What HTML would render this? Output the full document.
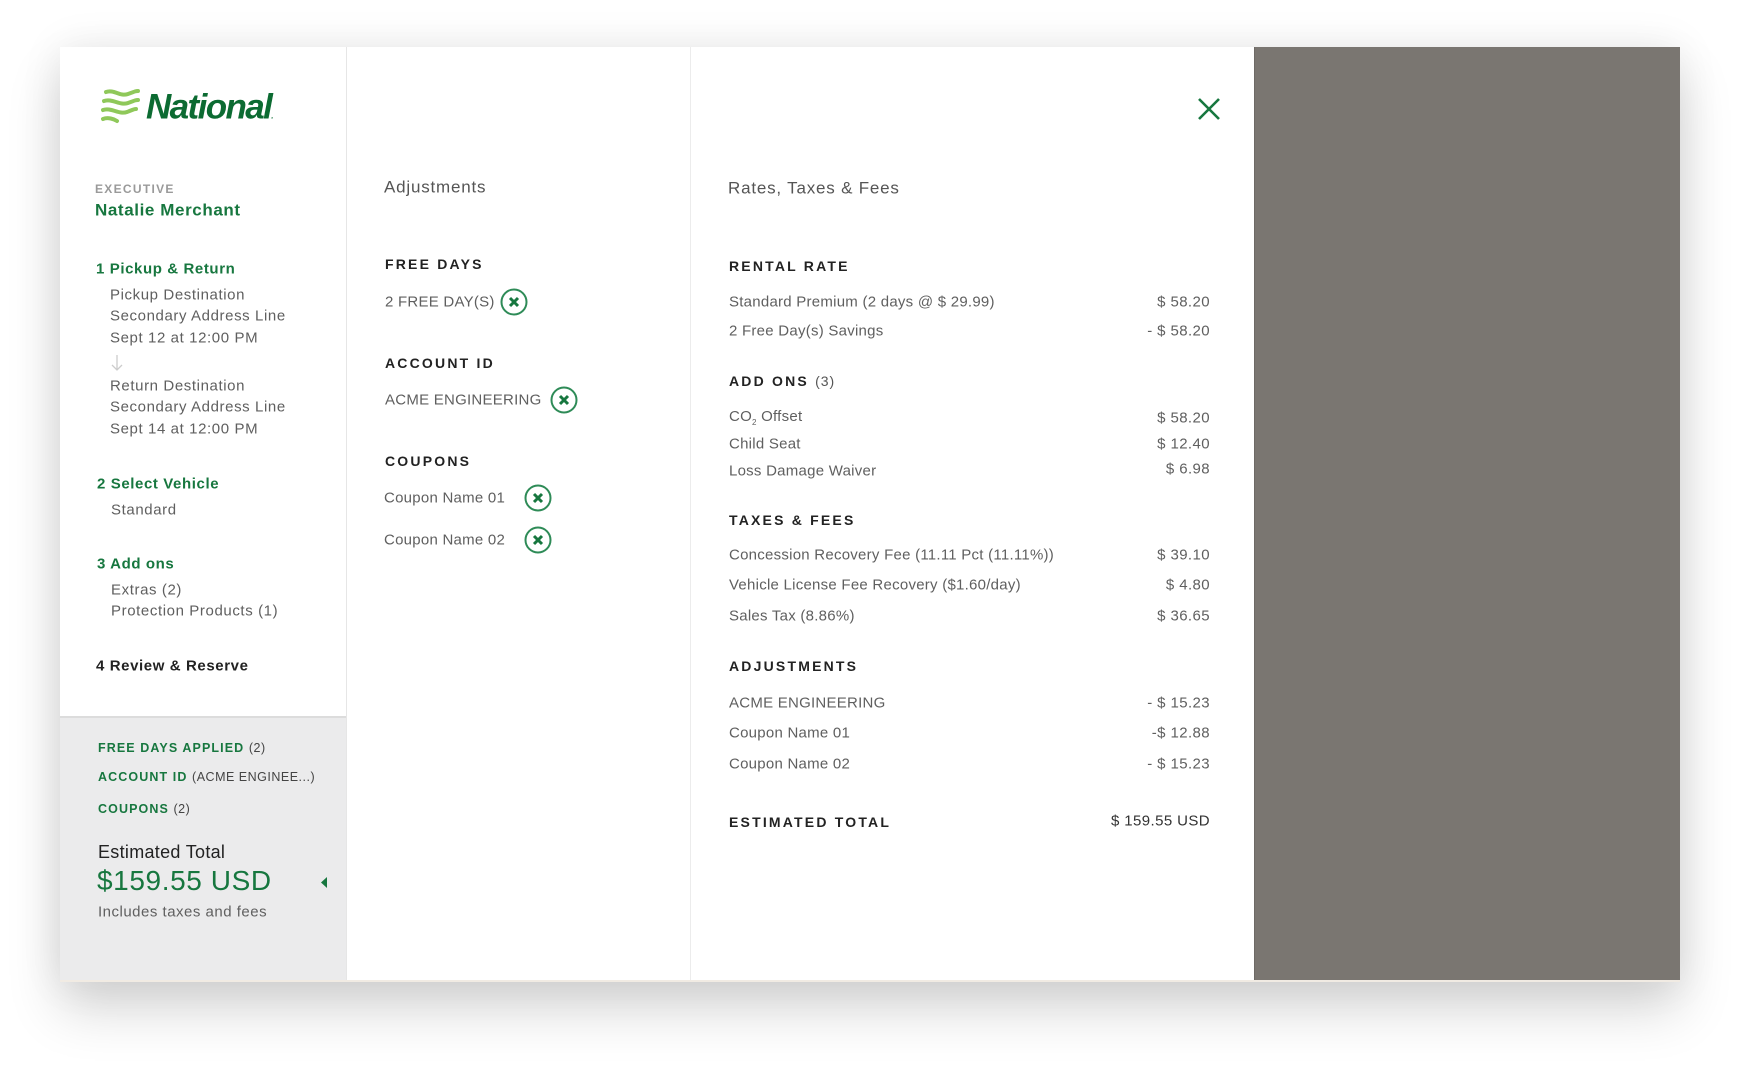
<!DOCTYPE html>
<html><head><meta charset="utf-8"><style>
*{margin:0;padding:0;box-sizing:border-box}
body{width:1740px;height:1082px;background:#fff;position:relative;overflow:hidden;font-family:"Liberation Sans",sans-serif}
.panel{position:absolute;left:60px;top:47px;width:1620px;height:935px;background:#fff;box-shadow:0 28px 50px rgba(0,0,0,0.16),0 0 40px rgba(0,0,0,0.08)}
.gray{position:absolute;left:1254px;top:47px;width:426px;height:935px;background:#7a7671;border-left:1px solid #6e6a66}
.div1{position:absolute;left:346px;top:47px;width:1px;height:935px;background:#e6e6e6}
.div2{position:absolute;left:690px;top:47px;width:1px;height:935px;background:#ececec}
.side{position:absolute;left:60px;top:716px;width:286px;height:266px;background:#ebebec;border-top:2px solid #dcdcdc}
.botline{position:absolute;left:60px;top:980px;width:1620px;height:2px;background:#f1ebe3}
.t{position:absolute;transform:translateY(-50%);white-space:nowrap;line-height:1}
.g{color:#17773f}
.gr{color:#5f5f5f;font-size:15px;letter-spacing:.25px}
.h{font-size:14px;font-weight:bold;letter-spacing:2.2px;color:#222}
.s{font-size:15px;font-weight:bold;letter-spacing:.6px}
.r{position:absolute;transform:translateY(-50%);white-space:nowrap;line-height:1;right:530px;font-size:15px;color:#5f5f5f;letter-spacing:.4px}
.sm{font-size:12.5px;font-weight:bold;letter-spacing:1.1px}
.sm span{font-weight:normal;color:#444;letter-spacing:.5px}
.x{position:absolute;width:28px;height:28px;transform:translate(-50%,-50%)}
</style></head><body>
<div class="panel"></div>
<div class="side"></div>
<div class="div1"></div>
<div class="div2"></div>
<div class="gray"></div>
<div class="botline"></div>

<svg style="position:absolute;left:100px;top:88px" width="42" height="36" viewBox="0 0 42 36">
<g fill="none" stroke="#8fc85a" stroke-width="4" stroke-linecap="round">
<path d="M6 4 C14 1 20 9 28 6 S36 3 38 3"/>
<path d="M4 13 C12 10 20 18 28 15 S36 12 38 12"/>
<path d="M3 22 C11 19 19 27 27 24 S34 21 36 21"/>
<path d="M3 31 C8 29 14 31 17 33"/>
</g></svg>
<div class="t" style="left:146px;top:107px;font-size:35px;font-weight:bold;font-style:italic;color:#0c6b32;letter-spacing:-1.6px">National<span style="font-size:8px">.</span></div>

<div class="t" style="left:95px;top:189px;font-size:12px;font-weight:bold;color:#9a9a9a;letter-spacing:1.3px">EXECUTIVE</div>
<div class="t g" style="left:95px;top:210px;font-size:17px;font-weight:bold;letter-spacing:.6px">Natalie Merchant</div>

<div class="t g s" style="left:96px;top:269px">1 Pickup &amp; Return</div>
<div class="t gr" style="left:110px;top:295px;letter-spacing:.6px">Pickup Destination</div>
<div class="t gr" style="left:110px;top:316px;letter-spacing:.6px">Secondary Address Line</div>
<div class="t gr" style="left:110px;top:338px;letter-spacing:.6px">Sept 12 at 12:00 PM</div>
<svg style="position:absolute;left:110px;top:354px" width="14" height="18"><path d="M7 1V16M2 11L7 16L12 11" fill="none" stroke="#ccc" stroke-width="1.3"/></svg>
<div class="t gr" style="left:110px;top:386px;letter-spacing:.6px">Return Destination</div>
<div class="t gr" style="left:110px;top:407px;letter-spacing:.6px">Secondary Address Line</div>
<div class="t gr" style="left:110px;top:429px;letter-spacing:.6px">Sept 14 at 12:00 PM</div>

<div class="t g s" style="left:97px;top:484px">2 Select Vehicle</div>
<div class="t gr" style="left:111px;top:510px;letter-spacing:.6px">Standard</div>
<div class="t g s" style="left:97px;top:564px">3 Add ons</div>
<div class="t gr" style="left:111px;top:590px;letter-spacing:.6px">Extras (2)</div>
<div class="t gr" style="left:111px;top:611px;letter-spacing:.6px">Protection Products (1)</div>
<div class="t s" style="left:96px;top:666px;color:#222">4 Review &amp; Reserve</div>

<div class="t g sm" style="left:98px;top:748px">FREE DAYS APPLIED <span>(2)</span></div>
<div class="t g sm" style="left:98px;top:777px">ACCOUNT ID <span>(ACME ENGINEE...)</span></div>
<div class="t g sm" style="left:98px;top:809px">COUPONS <span>(2)</span></div>
<div class="t" style="left:98px;top:852px;font-size:18px;color:#222;letter-spacing:.3px">Estimated Total</div>
<div class="t g" style="left:97px;top:881px;font-size:28px;letter-spacing:.6px">$159.55 USD</div>
<div class="t gr" style="left:98px;top:912px;font-size:15px;letter-spacing:.5px">Includes taxes and fees</div>
<svg style="position:absolute;left:321px;top:877px" width="8" height="11"><path d="M6 0V11L0 5.5Z" fill="#17773f"/></svg>

<div class="t" style="left:384px;top:187px;font-size:17px;color:#555;letter-spacing:.8px">Adjustments</div>
<div class="t h" style="left:385px;top:264px">FREE DAYS</div>
<div class="t gr" style="left:385px;top:302px">2 FREE DAY(S)</div>
<div class="t h" style="left:385px;top:363px">ACCOUNT ID</div>
<div class="t gr" style="left:385px;top:400px">ACME ENGINEERING</div>
<div class="t h" style="left:385px;top:461px">COUPONS</div>
<div class="t gr" style="left:384px;top:498px">Coupon Name 01</div>
<div class="t gr" style="left:384px;top:540px">Coupon Name 02</div>
<svg class="x" style="left:514px;top:302px" viewBox="0 0 28 28"><circle cx="14" cy="14" r="12.5" fill="none" stroke="#2e8b57" stroke-width="2"/><path d="M10 10L18 18M18 10L10 18" stroke="#17773f" stroke-width="3"/></svg>
<svg class="x" style="left:564px;top:400px" viewBox="0 0 28 28"><circle cx="14" cy="14" r="12.5" fill="none" stroke="#2e8b57" stroke-width="2"/><path d="M10 10L18 18M18 10L10 18" stroke="#17773f" stroke-width="3"/></svg>
<svg class="x" style="left:538px;top:498px" viewBox="0 0 28 28"><circle cx="14" cy="14" r="12.5" fill="none" stroke="#2e8b57" stroke-width="2"/><path d="M10 10L18 18M18 10L10 18" stroke="#17773f" stroke-width="3"/></svg>
<svg class="x" style="left:538px;top:540px" viewBox="0 0 28 28"><circle cx="14" cy="14" r="12.5" fill="none" stroke="#2e8b57" stroke-width="2"/><path d="M10 10L18 18M18 10L10 18" stroke="#17773f" stroke-width="3"/></svg>

<svg style="position:absolute;left:1198px;top:98px" width="22" height="22"><path d="M1 1L21 21M21 1L1 21" stroke="#17773f" stroke-width="2.6"/></svg>
<div class="t" style="left:728px;top:188px;font-size:17px;color:#555;letter-spacing:.8px">Rates, Taxes &amp; Fees</div>

<div class="t h" style="left:729px;top:266px">RENTAL RATE</div>
<div class="t gr" style="left:729px;top:302px">Standard Premium (2 days @ $ 29.99)</div><div class="r" style="top:302px">$ 58.20</div>
<div class="t gr" style="left:729px;top:331px">2 Free Day(s) Savings</div><div class="r" style="top:331px">- $ 58.20</div>

<div class="t h" style="left:729px;top:381px">ADD ONS <span style="font-weight:normal;color:#555;letter-spacing:1px">(3)</span></div>
<div class="t gr" style="left:729px;top:418px">CO<sub style="font-size:8px">2</sub> Offset</div><div class="r" style="top:418px">$ 58.20</div>
<div class="t gr" style="left:729px;top:444px">Child Seat</div><div class="r" style="top:444px">$ 12.40</div>
<div class="t gr" style="left:729px;top:471px">Loss Damage Waiver</div><div class="r" style="top:469px">$ 6.98</div>

<div class="t h" style="left:729px;top:520px">TAXES &amp; FEES</div>
<div class="t gr" style="left:729px;top:555px">Concession Recovery Fee (11.11 Pct (11.11%))</div><div class="r" style="top:555px">$ 39.10</div>
<div class="t gr" style="left:729px;top:585px">Vehicle License Fee Recovery ($1.60/day)</div><div class="r" style="top:585px">$ 4.80</div>
<div class="t gr" style="left:729px;top:616px">Sales Tax (8.86%)</div><div class="r" style="top:616px">$ 36.65</div>

<div class="t h" style="left:729px;top:666px">ADJUSTMENTS</div>
<div class="t gr" style="left:729px;top:703px">ACME ENGINEERING</div><div class="r" style="top:703px">- $ 15.23</div>
<div class="t gr" style="left:729px;top:733px">Coupon Name 01</div><div class="r" style="top:733px">-$ 12.88</div>
<div class="t gr" style="left:729px;top:764px">Coupon Name 02</div><div class="r" style="top:764px">- $ 15.23</div>

<div class="t h" style="left:729px;top:822px">ESTIMATED TOTAL</div>
<div class="r" style="top:821px;color:#333">$ 159.55 USD</div>
</body></html>
